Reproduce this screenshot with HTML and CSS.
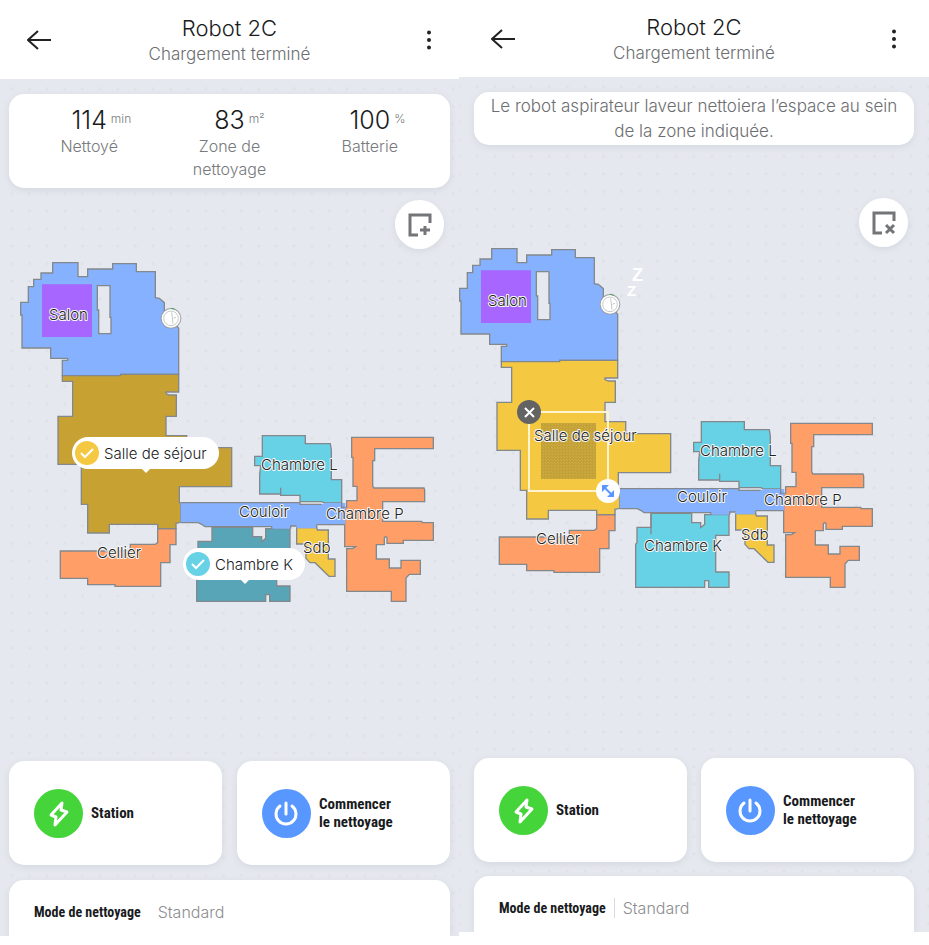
FILE: index.html
```html
<!DOCTYPE html>
<html lang="fr">
<head>
<meta charset="utf-8">
<meta name="viewport" content="width=device-width, initial-scale=1">
<title>Robot 2C</title>
<link rel="stylesheet" href="styles.css">
</head>
<body>
<main class="screens">

<section class="screen screen-rooms">
  <header class="topbar">
    <button class="icon-button" type="button" aria-label="Retour"><svg width="24" height="20" viewBox="0 0 24 20"><path d="M24 10H1M11 1 1 10l10 9"/></svg></button>
    <div class="heading"><h1>Robot 2C</h1><p>Chargement terminé</p></div>
    <button class="icon-button menu" type="button" aria-label="Menu"><svg width="6" height="20" viewBox="0 0 6 20"><circle cx="3" cy="2.500" r="2"/><circle cx="3" cy="10" r="2"/><circle cx="3" cy="17.500" r="2"/></svg></button>
  </header>
  <div class="stage">
    <dl class="card stats">
      <div><dd>114<span>min</span></dd><dt>Nettoyé</dt></div>
      <div><dd>83<span>m²</span></dd><dt>Zone de nettoyage</dt></div>
      <div><dd>100<span>%</span></dd><dt>Batterie</dt></div>
    </dl>
    <div class="map">
      <svg class="plan" width="459" height="573" viewBox="0 0 459 573">
        <defs>
          <path id="sejour" d="M187 377H362V373H536V426H498V431L508 435H529V499H498V557H560V593H695V710H538V757L542 760V817L528 820V836H473V823H328V849H263V763H244V643H174V499H218V394H187Z"/>
          <path id="chambre-k" d="M126 322H248V350H275V365L287 355V326H360V388H320V498H360V544H299V524H287V544H80V415L84 410V364H126Z"/>
          <g id="rooms-west">
            <path fill="#85b1ff" fill-rule="evenodd" d="M158 38H234V80H263V57H338V41H409V65H466V143L478 145 493 158V185L536 235V373H362V377H187V331H203V325H152V294H66V195H62V157H85V110H101V88H123V69H158ZM292 107H330V202H333V251H296V180H292Z"/>
            <path fill="#a666ff" stroke="none" d="M126 103H276V261H126Z"/>
            <path fill="#ff9e66" d="M473 836H528V884H510V938H482V1009H345V1004H263V985H181V903H391V883H466L473 878Z"/>
          </g>
          <g id="rooms-east">
            <path fill="#67d1e6" d="M277 47H406V71H481L484 90V179H515V249H465L455 245H390V226H332V203 222H269V165L272 137H254V109H277Z"/>
            <path fill="#ff9e66" d="M545 52H790V86H614V122H608V196L611 204H762L764 210V245H638V304H755L757 308H790V361H700V370H651V352L646 350 643 354V374H619V417H658V444H693V421H751V463H718L708 474V544H664V514H530V386H548L557 380H524V262H530V242H561V199H549V112H545Z"/>
            <path fill="#f5c842" d="M380 323H440L442 330H475V417H495V469H477L435 428H420L408 415V372H380Z"/>
            <path fill="#85b1ff" stroke="none" d="M32 248H390V253H455L465 249H526V314H440V325H380V318H362V326H308L305 320H105L85 308H32Z"/>
            <path fill="none" d="M32 248H390V253H455M440 314H524M440 314V325M380 318H362V326M305 325V320H105L95 313 85 308H32M515 249V262H524"/>
          </g>
          <g id="dock">
            <circle cx="513" cy="205" r="31" fill="#9a9da0" stroke="none"/>
            <circle cx="513" cy="205" r="28" fill="#fff" stroke="none"/>
            <circle cx="513" cy="205" r="22" fill="#fff" stroke="#c5c8ca" stroke-width="3"/>
            <path d="M515 187 519 221M520 205 528 202" fill="none" stroke="#c5c8ca" stroke-width="3"/>
            <path d="M513 175Q520 175 525 179" fill="none" stroke="#45a35a" stroke-width="3"/>
          </g>
        </defs>
        <g class="floor" transform="translate(0 -188) scale(.33333)">
          <g transform="translate(0 750)"><use href="#rooms-west"/><use href="#sejour" fill="#c7a233"/><use href="#dock"/></g>
          <g transform="translate(510 1260)"><use href="#chambre-k" fill="#58a5b8"/><use href="#rooms-east"/></g>
        </g>
        <g class="labels">
          <text x="49" y="132">Salon</text>
          <text x="239" y="329">Couloir</text>
          <text x="261" y="282">Chambre L</text>
          <text x="326" y="331">Chambre P</text>
          <text x="303" y="365">Sdb</text>
          <text x="97" y="370">Cellier</text>
        </g>
      </svg>
      <button class="pin pin-sejour" type="button"><svg width="24" height="24" viewBox="0 0 24 24"><circle cx="12" cy="12" r="12"/><path d="m6 12 4 4 8-8"/></svg>Salle de séjour</button>
      <button class="pin pin-chambre" type="button"><svg width="24" height="24" viewBox="0 0 24 24"><circle cx="12" cy="12" r="12"/><path d="m6 12 4 4 8-8"/></svg>Chambre K</button>
      <button class="zone-button" type="button" aria-label="Ajouter une zone"><svg width="24" height="24" viewBox="0 0 24 24"><path d="M10 22H2V2H22V10M17 13V22M12 17H22"/></svg></button>
    </div>
    <div class="actions">
      <button class="card action" type="button"><svg class="badge green" width="49" height="49" viewBox="0 0 49 49"><path d="M28 14 17 26 22 28 21 36 33 23 27 21Z"/></svg><span>Station</span></button>
      <button class="card action" type="button"><svg class="badge blue" width="49" height="49" viewBox="0 0 49 49"><path d="M24 14V25M18 17A10 10 0 1 0 30 17"/></svg><span>Commencer<br>le nettoyage</span></button>
    </div>
    <button class="card mode" type="button"><b>Mode de nettoyage</b><span>Standard</span></button>
  </div>
</section>

<section class="screen screen-zone">
  <header class="topbar">
    <button class="icon-button" type="button" aria-label="Retour"><svg width="24" height="20" viewBox="0 0 24 20"><path d="M24 10H1M11 1 1 10l10 9"/></svg></button>
    <div class="heading"><h1>Robot 2C</h1><p>Chargement terminé</p></div>
    <button class="icon-button menu" type="button" aria-label="Menu"><svg width="6" height="20" viewBox="0 0 6 20"><circle cx="3" cy="2.500" r="2"/><circle cx="3" cy="10" r="2"/><circle cx="3" cy="17.500" r="2"/></svg></button>
  </header>
  <div class="stage">
    <p class="card notice">Le robot aspirateur laveur nettoiera l’espace au sein de la zone indiquée.</p>
    <div class="map">
      <svg class="plan" width="470" height="613" viewBox="0 0 470 613">
        <defs><pattern id="weave" width="3" height="3" patternUnits="userSpaceOnUse"><path fill="#c3a139" d="M0 0H3V3H0Z"/><path fill="#d2ae40" d="M0 0H1V1H0ZM2 2H3V3H2Z"/></pattern></defs>
        <g class="floor" transform="translate(-20 -159) scale(.33333)">
          <g transform="translate(0 750)"><use href="#rooms-west"/><use href="#sejour" fill="#f5c842"/><use href="#dock"/></g>
          <g transform="translate(510 1260)"><use href="#chambre-k" fill="#67d1e6"/><path fill="none" d="M126 322V385"/><use href="#rooms-east"/></g>
        </g>
        <rect x="82" y="278" width="55" height="56" fill="url(#weave)"/>
        <rect x="70" y="267" width="79" height="79" fill="none" stroke="#fff3d0" stroke-width="2"/>
        <g class="labels">
          <text x="29" y="161">Salon</text>
          <text x="75" y="296">Salle de séjour</text>
          <text x="218" y="357">Couloir</text>
          <text x="241" y="311">Chambre L</text>
          <text x="305" y="360">Chambre P</text>
          <text x="282" y="395">Sdb</text>
          <text x="77" y="399">Cellier</text>
          <text x="185" y="406">Chambre K</text>
        </g>
        <g class="sleep"><text x="173" y="136">Z</text><text class="small" x="168" y="151">Z</text></g>
      </svg>
      <button class="handle handle-close" type="button" aria-label="Supprimer la zone"><svg width="24" height="24" viewBox="0 0 24 24"><path d="m8 8 9 9M17 8l-9 9"/></svg></button>
      <button class="handle handle-size" type="button" aria-label="Redimensionner la zone"><svg width="24" height="24" viewBox="0 0 24 24"><path d="M8 8 16 16"/><path class="tip" d="M6 6H13L6 13ZM18 18H11L18 11Z"/></svg></button>
      <button class="zone-button" type="button" aria-label="Retirer la zone"><svg width="24" height="24" viewBox="0 0 24 24"><path d="M10 22H2V2H22V10M14 14 22 22M22 14 14 22"/></svg></button>
    </div>
    <div class="actions">
      <button class="card action" type="button"><svg class="badge green" width="49" height="49" viewBox="0 0 49 49"><path d="M28 14 17 26 22 28 21 36 33 23 27 21Z"/></svg><span>Station</span></button>
      <button class="card action" type="button"><svg class="badge blue" width="49" height="49" viewBox="0 0 49 49"><path d="M24 14V25M18 17A10 10 0 1 0 30 17"/></svg><span>Commencer<br>le nettoyage</span></button>
    </div>
    <button class="card mode divided" type="button"><b>Mode de nettoyage</b><span>Standard</span></button>
  </div>
</section>

</main>
</body>
</html>
```

FILE: styles.css
```css
* { box-sizing: border-box; }
body { margin: 0; background: #fff; color: #191b1d; font-family: Inter, "Liberation Sans", sans-serif; font-weight: 300; }
h1, p, dl, dd, dt { margin: 0; font-weight: 300; }
button { border: 0; padding: 0; background: none; color: inherit; font: inherit; cursor: pointer; }
svg { display: block; flex: none; }

.screens { display: grid; grid-template-columns: 459fr 470fr; align-items: start; }
.screen { min-width: 0; --side: 9px; --gap: 15px; }
.screen-zone { --side: 15px; --gap: 14px; }

.topbar { display: grid; grid-template-columns: 24px 1fr 24px; align-items: center; height: 79px; padding: 0 27px; }
.screen-zone .topbar { height: 77px; padding: 0 32px; }
.icon-button { fill: none; stroke: #222; stroke-width: 2; }
.menu { justify-self: end; fill: #222; stroke: none; }
.heading { text-align: center; }
.heading h1 { font-size: 22px; line-height: 28px; }
.heading p { font-size: 17px; line-height: 24px; color: #6c6e71; }

.stage { padding: 15px var(--side) 0; overflow: hidden; background: radial-gradient(circle, #dee1e6 1px, transparent 2px) 3px 1px / calc(100% / 26) calc(100% / 49), #e5e8ee; }
.screen-zone .stage { background-position: 9px 1px; }
.card { display: block; border-radius: 15px; background: #fff; box-shadow: 0 2px 6px #d3d8e0; }

.stats { display: grid; grid-template-columns: repeat(3, 1fr); padding: 12px 10px 7px; text-align: center; }
.stats div { display: flex; flex-direction: column; align-items: center; }
.stats dd { position: relative; font-size: 25px; line-height: 29px; }
.stats dd span { position: absolute; left: 100%; top: 0; margin-left: 4px; font-size: 12px; line-height: 26px; color: #77797c; }
.stats dt { max-width: 90px; font-size: 16px; line-height: 23px; color: #77797c; }
.notice { padding: 2px 15px 1px; font-size: 17px; line-height: 25px; text-align: center; color: #6c6e71; }

.map { position: relative; margin: 0 calc(var(--side) * -1); overflow: hidden; }
.floor { stroke: #83888c; stroke-width: 4; }
.labels { font-size: 15px; fill: #1d1f21; stroke: #f5f6f8; stroke-width: 2px; paint-order: stroke; stroke-linejoin: round; }
.sleep { font-family: "Liberation Sans", sans-serif; font-size: 18px; font-weight: 700; fill: #fff; }
.sleep .small { font-size: 15px; }

.pin { position: absolute; display: flex; align-items: center; gap: 5px; height: 32px; padding: 0 12px 0 3px; border-radius: 16px; background: #fff; font-size: 15px; white-space: nowrap; }
.pin::after { content: ""; position: absolute; left: 50%; top: 100%; margin-left: -3px; border: 4px solid transparent; border-top-color: #fff; border-bottom: 0; }
.pin path { fill: none; stroke: #fff; stroke-width: 2; }
.pin-sejour { left: 72px; top: 249px; fill: #f5c842; }
.pin-chambre { left: 183px; top: 360px; fill: #67d1e6; }
.zone-button { position: absolute; top: 12px; right: 15px; display: grid; place-items: center; width: 49px; height: 49px; border-radius: 50%; background: #fff; box-shadow: 0 2px 6px #d3d8e0; fill: none; stroke: #737578; stroke-width: 3; }
.screen-zone .zone-button { top: 53px; right: 21px; }
.handle { position: absolute; border-radius: 50%; }
.handle-close { left: 58px; top: 255px; background: #636363; stroke: #fff; stroke-width: 2; }
.handle-size { left: 137px; top: 334px; background: #fff; stroke: #5797ff; stroke-width: 2; }
.handle .tip { fill: #5797ff; stroke: none; }

.actions { display: grid; grid-template-columns: 1fr 1fr; gap: var(--gap); }
.action { display: flex; align-items: center; gap: 8px; min-height: 104px; padding: 0 25px; text-align: left; font: bold 15px/18px "Roboto Condensed", "Liberation Sans Narrow", "Liberation Sans", sans-serif; }
.badge { border-radius: 50%; fill: none; stroke: #fff; stroke-width: 3; stroke-linejoin: round; stroke-linecap: round; }
.green { background: #45d43a; }
.blue { background: #5797ff; }
.mode { display: flex; align-items: center; width: 100%; height: 56px; margin-top: var(--gap); padding: 8px 25px 0; border-radius: 15px 15px 0 0; text-align: left; }
.mode b { font: bold 14px/20px "Roboto Condensed", "Liberation Sans Narrow", "Liberation Sans", sans-serif; }
.mode span { margin-left: 8px; padding-left: 8px; border-left: 1px solid transparent; font-size: 16px; line-height: 20px; color: #8b8d90; }
.divided span { border-color: #d9dbdf; }
```
